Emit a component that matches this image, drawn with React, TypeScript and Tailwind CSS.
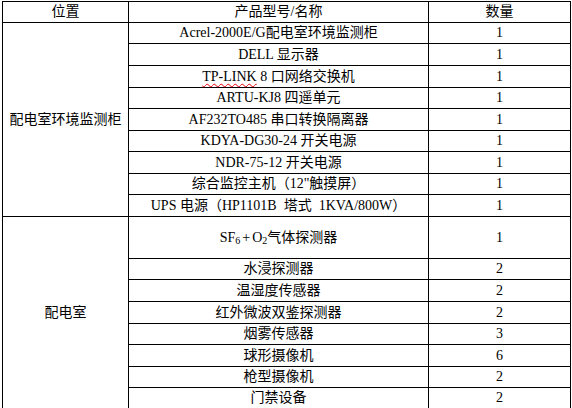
const cabinetRows: [React.ReactNode, string][] = [
  ["Acrel-2000E/G配电室环境监测柜", "1"],
  ["DELL 显示器", "1"],
  [
    <>
      <span className="underline decoration-wavy decoration-red-600 decoration-1 underline-offset-2">TP-LINK</span> 8 口网络交换机
    </>,
    "1",
  ],
  ["ARTU-KJ8 四遥单元", "1"],
  ["AF232TO485 串口转换隔离器", "1"],
  ["KDYA-DG30-24 开关电源", "1"],
  ["NDR-75-12 开关电源", "1"],
  ["综合监控主机（12\"触摸屏）", "1"],
  ["UPS 电源（HP1101B  塔式  1KVA/800W）", "1"],
];

const roomRows: [React.ReactNode, string][] = [
  [
    <>
      SF<sub className="text-[10px] relative top-[3px] align-baseline">6</sub>
      <span className="mx-[2px]">+</span>O<sub className="text-[10px] relative top-[3px] align-baseline">2</sub>气体探测器
    </>,
    "1",
  ],
  ["水浸探测器", "2"],
  ["温湿度传感器", "2"],
  ["红外微波双鉴探测器", "2"],
  ["烟雾传感器", "3"],
  ["球形摄像机", "6"],
  ["枪型摄像机", "2"],
  ["门禁设备", "2"],
];

function Cell({ children, className = "" }: { children: React.ReactNode; className?: string }) {
  return (
    <div className={`bg-white flex items-center justify-center leading-none whitespace-pre ${className}`}>
      {children}
    </div>
  );
}

export default function App() {
  return (
    <div
      className="w-[572px] h-[408px] overflow-hidden bg-white text-black text-[14px] pt-[1px] pl-[2px]"
      style={{ fontFamily: '"Liberation Serif", "Noto Sans CJK SC", serif' }}
    >
      <div className="inline-grid gap-px bg-black p-px grid-cols-[125px_299px_141px] grid-rows-[20px_20px_21px_21px_20px_21px_20px_21px_20px_21px_41px_20px_21px_21px_20px_21px_20px_20px]">
        <Cell>位置</Cell>
        <Cell>产品型号/名称</Cell>
        <Cell>数量</Cell>

        <Cell className="row-span-9">配电室环境监测柜</Cell>
        {cabinetRows.map(([name, qty], i) => (
          <div key={i} className="contents">
            <Cell>{name}</Cell>
            <Cell>{qty}</Cell>
          </div>
        ))}

        <Cell className="row-span-8">配电室</Cell>
        {roomRows.map(([name, qty], i) => (
          <div key={i} className="contents">
            <Cell>{name}</Cell>
            <Cell>{qty}</Cell>
          </div>
        ))}
      </div>
    </div>
  );
}
